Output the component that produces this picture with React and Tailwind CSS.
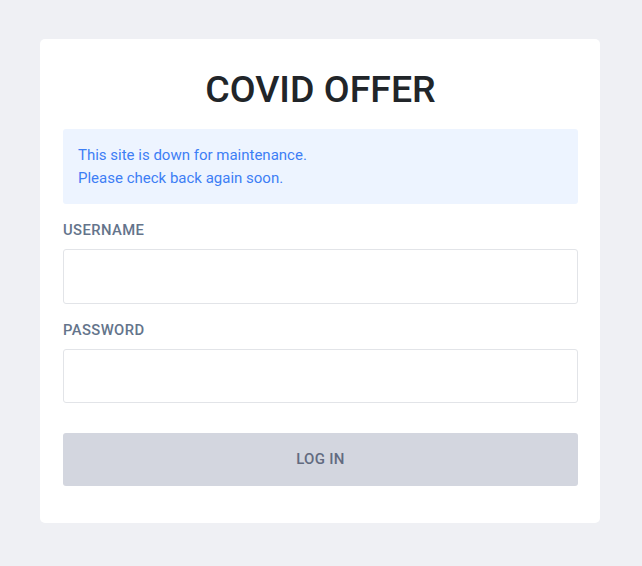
import React from 'react';

export default function App() {
    return (
        <div className="min-h-screen bg-[#eff0f4] pt-[39px] px-[40px]" style={{ fontFamily: 'Roboto, "Liberation Sans", sans-serif' }}>
            <div className="w-[560px] bg-white rounded-[5px] pl-[23px] pr-[22px] pt-[28px] pb-[37px]">
                <h1 className="text-center text-[37.5px] leading-[44px] font-medium text-[#212529]">COVID OFFER</h1>

                <div className="mt-[18px] bg-[#edf4ff] rounded-[3px] px-[15px] pt-[15px] pb-[14px] text-[15px] leading-[23px] text-[#3d7ef5]">
                    <p>This site is down for maintenance.</p>
                    <p>Please check back again soon.</p>
                </div>

                <label className="block mt-[17px] text-[14.8px] leading-[18px] font-medium tracking-[0.4px] text-[#64748b]">USERNAME</label>
                <input type="text" className="block w-full mt-[10px] h-[55px] border border-[#e2e4e8] rounded-[3px] outline-none" />

                <label className="block mt-[17px] text-[14.8px] leading-[18px] font-medium tracking-[0.4px] text-[#64748b]">PASSWORD</label>
                <input type="password" className="block w-full mt-[10px] h-[54px] border border-[#e2e4e8] rounded-[3px] outline-none" />

                <button className="block w-full mt-[30px] h-[53px] bg-[#d3d6df] rounded-[3px] text-[15px] font-medium tracking-[0.3px] text-[#626b80]">LOG IN</button>
            </div>
        </div>
    );
}
